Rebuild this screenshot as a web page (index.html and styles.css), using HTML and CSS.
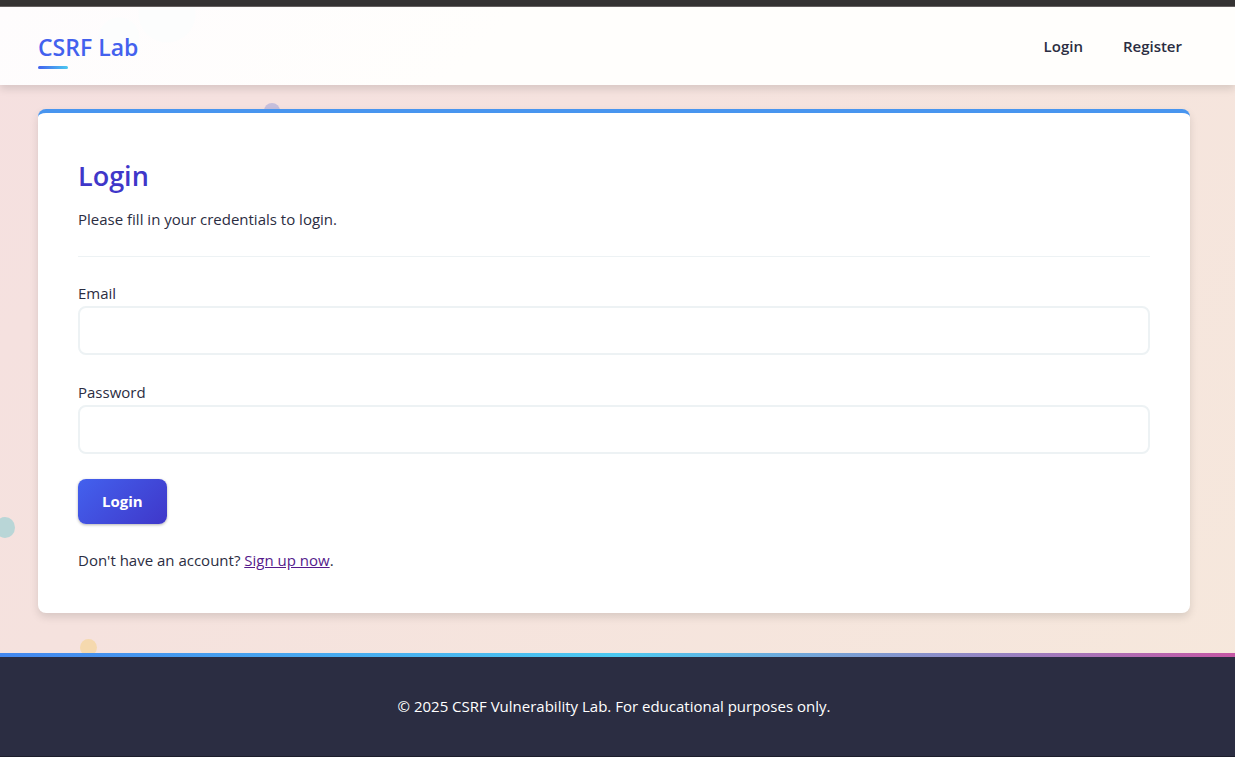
FILE: index.html
```html
<!DOCTYPE html>
<html lang="en">
<head>
<meta charset="utf-8">
<title>CSRF Lab - Login</title>
<link rel="stylesheet" href="styles.css">
</head>
<body>
<div class="top-strip"></div>
<header class="site-header">
  <a class="logo" href="#">CSRF Lab</a>
  <nav class="nav">
    <a class="nav-link" href="#">Login</a>
    <a class="nav-link" href="#">Register</a>
  </nav>
</header>
<main class="main">
  <span class="bubble bubble-violet"></span>
  <span class="bubble bubble-teal"></span>
  <span class="bubble bubble-yellow"></span>
  <section class="card">
    <h2 class="card-title">Login</h2>
    <p class="text">Please fill in your credentials to login.</p>
    <form class="form">
      <div class="field">
        <label class="text" for="email">Email</label>
        <input class="input" type="email" id="email" name="email">
      </div>
      <div class="field">
        <label class="text" for="password">Password</label>
        <input class="input" type="password" id="password" name="password">
      </div>
      <button class="button" type="submit">Login</button>
    </form>
    <p class="text signup">Don't have an account? <a class="signup-link" href="#">Sign up now</a>.</p>
  </section>
</main>
<footer class="footer">
  <p class="footer-text">© 2025 CSRF Vulnerability Lab. For educational purposes only.</p>
</footer>
</body>
</html>
```
FILE: styles.css
```css
* {
  box-sizing: border-box;
}

body {
  margin: 0;
  min-height: 100vh;
  display: flex;
  flex-direction: column;
  font-family: "Segoe UI", "Open Sans", "Noto Sans", sans-serif;
  font-size: 15px;
  line-height: 25px;
  color: #2b2d42;
  background: linear-gradient(135deg, #f5e0e0 0%, #f5e2de 35%, #f6e8dc 100%);
}

.top-strip {
  height: 7px;
  background: #353333;
  border-bottom: 1px solid #666161;
}

.site-header {
  position: relative;
  z-index: 1;
  display: flex;
  align-items: center;
  justify-content: space-between;
  min-height: 78px;
  padding: 0 53px 0 38px;
  background:
    radial-gradient(circle at 167px 7px, #fcfdfd 28px, transparent 29px),
    radial-gradient(circle at 119px 31px, #fcfdfd 20px, transparent 21px),
    linear-gradient(135deg, #fefcfd, #fffefc 40%);
  box-shadow: 0 4px 8px rgba(0, 0, 0, 0.12);
}

.logo {
  position: relative;
  padding: 5px 0 3px;
  font-size: 23px;
  line-height: 32px;
  font-weight: 600;
  color: #4361ee;
  text-decoration: none;
}

.logo::after {
  content: "";
  position: absolute;
  left: 0;
  bottom: -3px;
  width: 30px;
  height: 3px;
  border-radius: 2px;
  background: linear-gradient(90deg, #4361ee, #4cc9f0);
}

.nav {
  display: flex;
  gap: 40px;
}

.nav-link {
  color: #2b2d42;
  font-weight: 600;
  text-decoration: none;
}

.main {
  position: relative;
  flex: 1;
  padding: 24px 45px 40px 38px;
}

.bubble {
  position: absolute;
  border-radius: 50%;
}

.bubble-violet {
  left: 264px;
  top: 18px;
  width: 16px;
  height: 16px;
  background: #c6bfdc;
}

.bubble-teal {
  left: -5px;
  top: 432px;
  width: 20px;
  height: 21px;
  background: #b9d6d7;
}

.bubble-yellow {
  left: 80px;
  bottom: -3px;
  width: 17px;
  height: 17px;
  background: #f5d9ae;
}

.card {
  position: relative;
  padding: 40px;
  border-top: 4px solid #4895ef;
  border-radius: 8px;
  background: #fff;
  box-shadow: 0 4px 8px rgba(0, 0, 0, 0.12);
}

.card-title {
  margin: 0 0 8px;
  font-size: 27px;
  line-height: 46px;
  font-weight: 600;
  color: #3f37c9;
}

.text {
  margin: 0;
}

.form {
  display: flex;
  flex-direction: column;
  align-items: flex-start;
  gap: 25px;
  margin: 24px 0;
  padding-top: 24px;
  border-top: 1px solid #edf2f4;
}

.field {
  display: flex;
  flex-direction: column;
  width: 100%;
}

.input {
  height: 49px;
  padding: 12px 16px;
  border: 2px solid #edf2f4;
  border-radius: 8px;
  background: #fff;
  font: inherit;
  color: inherit;
}

.button {
  height: 45px;
  padding: 0 24px;
  border: 0;
  border-radius: 8px;
  background: linear-gradient(135deg, #4361ee, #3f37c9);
  box-shadow: 0 1px 3px rgba(0, 0, 0, 0.3);
  font: inherit;
  font-weight: 700;
  color: #fff;
}

.signup-link {
  color: #551a8b;
}

.footer {
  position: relative;
  padding: 41px 7px 37px 0;
  border-bottom: 1px solid #1c1d2b;
  background: #2b2d42;
  color: #fff;
  text-align: center;
}

.footer::before {
  content: "";
  position: absolute;
  top: 0;
  left: 0;
  width: 100%;
  height: 4px;
  background: linear-gradient(90deg, #4387ee, #4cc9f0 50%, #c557a5);
}

.footer-text {
  margin: 0;
  font-weight: 500;
}
```
